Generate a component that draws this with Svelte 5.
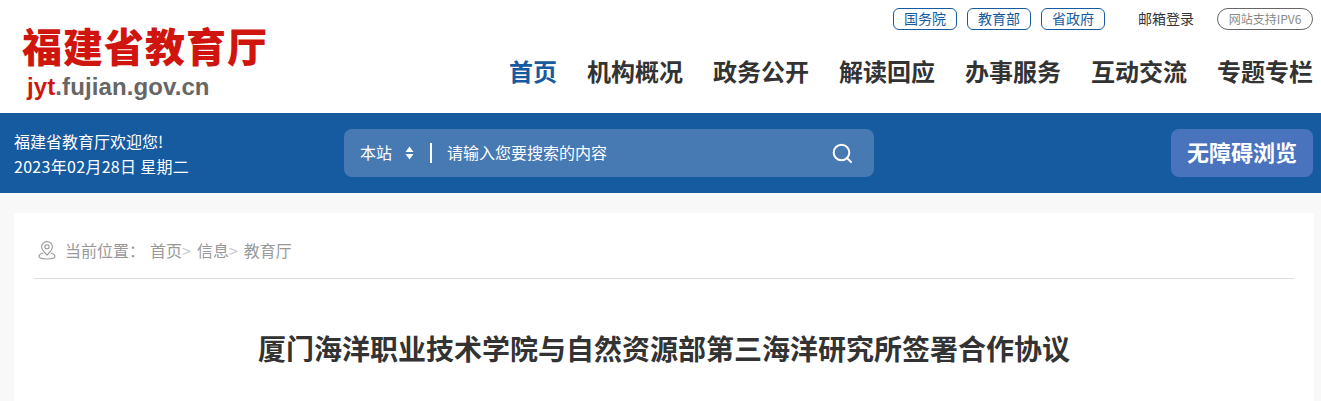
<script>
    const links = ['国务院', '教育部', '省政府'];
    const nav = ['首页', '机构概况', '政务公开', '解读回应', '办事服务', '互动交流', '专题专栏'];
</script>

<div class="page">
    <header class="header">
        <div class="logo">
            <div class="logo-title">福建省教育厅</div>
            <div class="logo-url"><span>jyt</span>.fujian.gov.cn</div>
        </div>
        <div class="header-right">
            <div class="top-links">
                {#each links as link}
                    <a class="pill" href="#top">{link}</a>
                {/each}
                <a class="mail" href="#top">邮箱登录</a>
                <span class="ipv6">网站支持IPV6</span>
            </div>
            <nav class="nav">
                {#each nav as item, i}
                    <a class:active={i === 0} href="#top">{item}</a>
                {/each}
            </nav>
        </div>
    </header>

    <div class="bar">
        <div class="welcome">
            <p>福建省教育厅欢迎您!</p>
            <p class="date">2023年02月28日 星期二</p>
        </div>
        <div class="search">
            <span class="scope">本站</span>
            <svg class="arrows" width="9" height="14" viewBox="0 0 9 14">
                <path d="M4.5 0.5 L8.5 6 H0.5 Z" fill="#fff" />
                <path d="M4.5 13.5 L8.5 8 H0.5 Z" fill="#fff" />
            </svg>
            <span class="divider"></span>
            <span class="placeholder">请输入您要搜索的内容</span>
            <svg class="glass" width="22" height="22" viewBox="0 0 22 22" fill="none" stroke="#fff" stroke-width="2">
                <circle cx="10.5" cy="10.5" r="7.8" />
                <path d="M16 16 L20 20" stroke-linecap="round" />
            </svg>
        </div>
        <a class="access" href="#top">无障碍浏览</a>
    </div>

    <main class="card">
        <div class="crumbs">
            <svg class="pin" width="18" height="19" viewBox="0 0 18 19" fill="none" stroke="#9a9a9a" stroke-width="1.1">
                <path d="M9 14 C5.6 10.8 3.6 8.6 3.6 5.8 A5.4 5.2 0 0 1 14.4 5.8 C14.4 8.6 12.4 10.8 9 14 Z" />
                <circle cx="9" cy="5.8" r="2.1" />
                <path d="M5.2 12 C2.4 12.8 1 14 1 15.3 C1 17 4.5 18 9 18 C13.5 18 17 17 17 15.3 C17 14 15.6 12.8 12.8 12" />
            </svg>
            <span class="here">当前位置：</span>
            <span>首页</span><i>&gt;</i>
            <span>信息</span><i>&gt;</i>
            <span>教育厅</span>
        </div>
        <h1>厦门海洋职业技术学院与自然资源部第三海洋研究所签署合作协议</h1>
    </main>
</div>

<style>
    :global(body) {
        margin: 0;
        background: #f8f8f8;
        overflow: hidden;
    }
    .page {
        font-family: "Noto Sans CJK SC", "Liberation Sans", sans-serif;
        height: 401px;
        overflow: hidden;
    }
    a {
        text-decoration: none;
        color: inherit;
    }
    .header {
        height: 113px;
        background: #fff;
        display: flex;
        justify-content: space-between;
        box-sizing: border-box;
        padding: 0 8px 0 22px;
    }
    .logo {
        padding-top: 22px;
    }
    .logo-title {
        font-size: 40px;
        line-height: 46px;
        font-weight: 900;
        color: #d0150f;
        letter-spacing: 1px;
    }
    .logo-url {
        font-family: "Liberation Sans", sans-serif;
        font-size: 24px;
        line-height: 28px;
        font-weight: 700;
        color: #666;
        margin: 5px 0 0 5px;
        letter-spacing: 0.1px;
    }
    .logo-url span {
        color: #d0150f;
    }
    .header-right {
        display: flex;
        flex-direction: column;
        align-items: flex-end;
    }
    .top-links {
        display: flex;
        align-items: center;
        height: 22px;
        margin-top: 8px;
        font-size: 14px;
    }
    .pill {
        box-sizing: border-box;
        width: 64px;
        height: 22px;
        line-height: 18px;
        border: 1px solid #165a9f;
        border-radius: 6px;
        color: #165a9f;
        text-align: center;
        margin-right: 10px;
    }
    .mail {
        color: #333;
        margin: 0 23px;
        padding-bottom: 2px;
    }
    .ipv6 {
        box-sizing: border-box;
        width: 96px;
        height: 22px;
        line-height: 19px;
        border: 1px solid #666;
        border-radius: 11px;
        color: #888;
        text-align: center;
        font-size: 12px;
    }
    .nav {
        display: flex;
        gap: 30px;
        margin-top: 24px;
        font-size: 24px;
        line-height: 34px;
        font-weight: 700;
        color: #333;
    }
    .nav .active {
        color: #165a9f;
    }
    .bar {
        height: 80px;
        background: #165a9f;
        display: flex;
        align-items: center;
        color: #fff;
        padding: 0 8px 0 14px;
        box-sizing: border-box;
    }
    .welcome {
        width: 330px;
        font-size: 16px;
        line-height: 25px;
        padding-top: 2px;
    }
    .welcome p {
        margin: 0;
    }
    .date {
        letter-spacing: 0.3px;
    }
    .search {
        width: 530px;
        height: 48px;
        box-sizing: border-box;
        background: #4779b3;
        border-radius: 8px;
        display: flex;
        align-items: center;
        padding-left: 16px;
        font-size: 16px;
        line-height: 24px;
    }
    .scope, .placeholder {
        padding-bottom: 2px;
    }
    .arrows {
        margin-left: 13px;
    }
    .divider {
        width: 2px;
        height: 20px;
        background: #fff;
        margin: 0 15px 0 16px;
    }
    .placeholder {
        flex: 1;
    }
    .glass {
        margin-right: 21px;
    }
    .access {
        margin-left: auto;
        width: 142px;
        height: 48px;
        line-height: 45px;
        border-radius: 8px;
        background: #4a73bd;
        text-align: center;
        font-size: 22px;
        font-weight: 700;
    }
    .card {
        margin: 20px 7px 0 14px;
        background: #fff;
        padding: 0 20px;
        height: 300px;
    }
    .crumbs {
        box-sizing: border-box;
        height: 66px;
        padding: 9px 0 0 4px;
        border-bottom: 1px solid #ddd;
        display: flex;
        align-items: center;
        color: #999;
        font-size: 16px;
    }
    .pin {
        margin-right: 9px;
    }
    .here {
        margin-right: 5px;
    }
    .crumbs i {
        font-style: normal;
        color: #ccc;
        margin-right: 6px;
    }
    h1 {
        margin: 49px 0 0;
        text-align: center;
        font-size: 28px;
        line-height: 40px;
        font-weight: 700;
        color: #333;
    }
</style>
